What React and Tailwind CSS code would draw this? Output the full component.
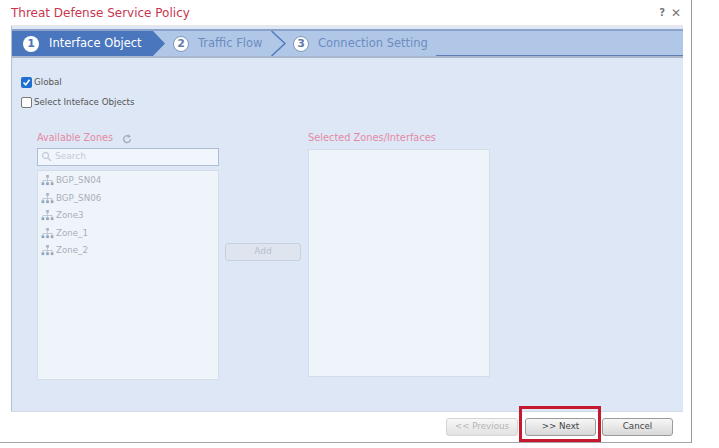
import React from "react";

const zones = ["BGP_SN04", "BGP_SN06", "Zone3", "Zone_1", "Zone_2"];

const ZoneIcon = () => (
  <svg width="13" height="11" viewBox="0 0 14 12" className="shrink-0">
    <rect x="5.5" y="0" width="3" height="3" fill="#a9b4c4" />
    <path d="M7 3V6M2 8V6H12V8M7 6V8" stroke="#bcc5d1" strokeWidth="1" fill="none" />
    <rect x="0.5" y="8" width="3" height="3" fill="#8fa6bf" />
    <rect x="5.5" y="8" width="3" height="3" fill="#8fa6bf" />
    <rect x="10.5" y="8" width="3" height="3" fill="#a9a2ab" />
  </svg>
);

const StepNumber = ({ n, active }) => (
  <span
    className={`flex h-[16px] w-[16px] shrink-0 items-center justify-center rounded-full bg-white text-[11px] font-bold leading-none ${
      active ? "text-[#4a76bd]" : "border border-[#7f97bd] text-[#5f7ba8]"
    }`}
  >
    {n}
  </span>
);

const StepBar = () => (
  <div className="relative flex h-[29px] border-y-[2px] border-t-[#8ba2c9] border-b-[#a9b6cc] bg-[#b1c7e7]">
    <div className="relative flex h-full w-[141px] shrink-0 items-center gap-[10px] whitespace-nowrap bg-[#4a76bd] pl-[11px]">
      <StepNumber n="1" active />
      <span className="text-[11.5px] text-white">Interface Object</span>
      <svg width="12" height="25" viewBox="0 0 12 25" className="absolute left-full top-0">
        <path d="M0 0L12 12.5L0 25Z" fill="#4a76bd" />
      </svg>
    </div>
    <div className="flex h-full w-[118px] shrink-0 items-center gap-[9px] whitespace-nowrap pl-[20px]">
      <StepNumber n="2" />
      <span className="text-[11.5px] text-[#6c8cc0]">Traffic Flow</span>
    </div>
    <svg width="15" height="25" viewBox="0 0 15 25" className="shrink-0">
      <path d="M0.5 0L14 12.5L0.5 25" fill="none" stroke="#4f7abd" strokeWidth="1.5" />
    </svg>
    <div className="flex h-full items-center gap-[9px] whitespace-nowrap pl-[7px]">
      <StepNumber n="3" />
      <span className="text-[11.5px] text-[#6c8cc0]">Connection Setting</span>
    </div>
    <div className="absolute bottom-0 left-[424px] right-0 h-px bg-[#5f7db5]" />
  </div>
);

const Dialog = () => (
  <div className="flex h-[443px] w-[692px] flex-col border-r border-b border-r-[#9a9a9a] border-b-[#a8a8a8] pl-[11px] pr-[8px] font-['DejaVu_Sans',sans-serif]">
    <header className="flex h-[26px] shrink-0 items-center justify-between border-b border-[#ece6e4]">
      <h1 className="text-[12px] leading-none text-[#c8364e]">Threat Defense Service Policy</h1>
      <div className="flex items-center gap-[6px] pr-[2px] text-[10px] leading-none text-[#777]">
        <span className="font-bold">?</span>
        <span className="text-[12px]">✕</span>
      </div>
    </header>

    <div className="flex min-h-0 flex-1 flex-col border-l border-[#b3bfd3] bg-[#dee7f5] pt-[3px]">
      <StepBar />
      <div className="pl-[9px] pt-[15px]">
        <label className="flex h-[20px] items-center gap-[2px] text-[8.7px] text-[#555]">
          <span className="mb-[1px] flex h-[11px] w-[11px] items-center justify-center rounded-[2px] bg-[#1f6fd0]">
            <svg width="9" height="9" viewBox="0 0 9 9">
              <path d="M1.5 4.5L3.7 6.8L7.6 1.8" fill="none" stroke="#fff" strokeWidth="1.6" />
            </svg>
          </span>
          Global
        </label>
        <label className="flex h-[20px] items-center gap-[2px] text-[8.7px] text-[#555]">
          <span className="mb-[1px] h-[11px] w-[11px] rounded-[2px] border border-[#777] bg-white" />
          Select Inteface Objects
        </label>
      </div>

      <div className="flex pl-[25px] pt-[18px]">
        <div className="w-[182px] shrink-0">
          <div className="flex h-[17px] items-center gap-[9px] pb-[2px] text-[9.6px] text-[#e58aa6]">
            Available Zones
            <svg width="10" height="10" viewBox="0 0 10 10">
              <path d="M8.4 5.2A3.4 3.4 0 1 1 6.8 2.2" fill="none" stroke="#a6afbe" strokeWidth="1.5" />
              <path d="M5.8 0L9 2.6L5.6 4.1Z" fill="#a6afbe" />
            </svg>
          </div>
          <div className="flex h-[18px] items-center gap-[3px] border border-[#aebfd5] bg-[#f1f5fc] pb-[1px] pl-[3px] text-[9px] text-[#c4ccd8]">
            <svg width="11" height="11" viewBox="0 0 11 11">
              <circle cx="4.5" cy="4.5" r="3" fill="none" stroke="#c6ced9" strokeWidth="1.3" />
              <path d="M7 7L10 10" stroke="#c6ced9" strokeWidth="1.6" />
            </svg>
            Search
          </div>
          <ul className="mt-[4px] h-[210px] border border-[#d3dce9] bg-[#eff4fb] pt-[1px]">
            {zones.map((zone) => (
              <li key={zone} className="flex h-[17.5px] items-center gap-[2px] pl-[3px] text-[8.7px] text-[#a9afb9]">
                <ZoneIcon />
                {zone}
              </li>
            ))}
          </ul>
        </div>

        <div className="flex w-[89px] shrink-0 items-start justify-start pl-[6px] pt-[112px]">
          <button className="h-[18px] w-[76px] rounded-[3px] border border-[#c7d0dd] bg-[#dfe5ef] text-[9px] text-[#b8bfca]">
            Add
          </button>
        </div>

        <div className="w-[182px] shrink-0">
          <div className="flex h-[18px] items-center pb-[3px] text-[9.8px] text-[#e58aa6]">Selected Zones/Interfaces</div>
          <div className="h-[228px] border border-[#d3dce9] bg-[#eff4fb]" />
        </div>
      </div>
    </div>

    <footer className="flex h-[31px] shrink-0 items-center justify-end gap-[6px] border-t border-[#d5dbe5] pr-[10px]">
      <button className="mr-[1px] h-[18px] w-[72px] rounded-[3px] border border-[#d4d4d4] bg-gradient-to-b from-[#f7f7f7] to-[#e2e2e2] text-[8.7px] text-[#b5b5b5]">
        &lt;&lt; Previous
      </button>
      <div className="relative">
        <button className="block h-[18px] w-[71px] rounded-[3px] border border-[#9b9b9b] bg-gradient-to-b from-[#f7f7f7] to-[#d8d8d8] text-[8.7px] text-[#444]">
          &gt;&gt; Next
        </button>
        <div className="absolute -left-[6px] -right-[5px] -bottom-[6px] -top-[12px] border-[3px] border-[#c4192f]" />
      </div>
      <button className="h-[18px] w-[71px] rounded-[3px] border border-[#9b9b9b] bg-gradient-to-b from-[#f7f7f7] to-[#d8d8d8] text-[8.7px] text-[#444]">
        Cancel
      </button>
    </footer>
  </div>
);

export default function App() {
  return (
    <div className="h-[448px] w-[719px] overflow-hidden bg-white">
      <Dialog />
    </div>
  );
}
